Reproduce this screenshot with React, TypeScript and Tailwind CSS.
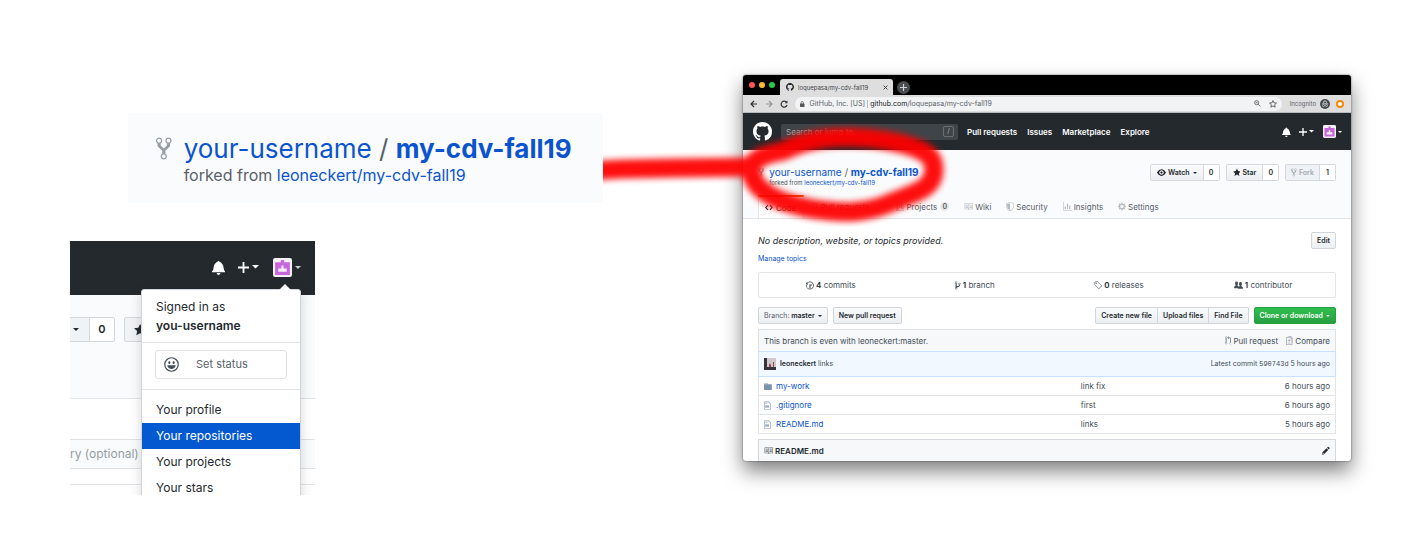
import React from "react";
import type { ReactNode } from "react";

type Glyph = { w: number; d: string };

const ICONS = {
  fork: { w: 10, d: "M8 1a1.993 1.993 0 0 0-1 3.72V6L5 8 3 6V4.72A1.993 1.993 0 0 0 2 1a1.993 1.993 0 0 0-1 3.72V6.5l3 3v1.78A1.993 1.993 0 0 0 5 15a1.993 1.993 0 0 0 1-3.72V9.5l3-3V4.72A1.993 1.993 0 0 0 8 1zM2 4.2C1.34 4.2.8 3.65.8 3c0-.65.55-1.2 1.2-1.2.65 0 1.2.55 1.2 1.2 0 .65-.55 1.2-1.2 1.2zm3 10c-.66 0-1.2-.55-1.2-1.2 0-.65.55-1.2 1.2-1.2.65 0 1.2.55 1.2 1.2 0 .65-.55 1.2-1.2 1.2zm3-10c-.66 0-1.2-.55-1.2-1.2 0-.65.55-1.2 1.2-1.2.65 0 1.2.55 1.2 1.2 0 .65-.55 1.2-1.2 1.2z" },
  bell: { w: 14, d: "M13.99 11.991v1H0v-1l.73-.58c.769-.769.809-2.547 1.189-4.416.77-3.767 4.077-4.996 4.077-4.996 0-.55.45-1 .999-1 .55 0 1 .45 1 1 0 0 3.387 1.229 4.156 4.996.38 1.879.42 3.657 1.19 4.417l.659.58h-.01zM6.995 15.99c1.11 0 1.999-.89 1.999-1.999H4.996c0 1.11.89 1.999 1.999 1.999z" },
  star: { w: 14, d: "M14 6l-4.9-.64L7 1 4.9 5.36 0 6l3.6 3.26L2.67 14 7 11.67 11.33 14l-.93-4.74L14 6z" },
  eye: { w: 16, d: "M8.06 2C3 2 0 8 0 8s3 6 8.06 6C13 14 16 8 16 8s-3-6-7.94-6zM8 12c-2.2 0-4-1.78-4-4 0-2.2 1.8-4 4-4 2.22 0 4 1.8 4 4 0 2.22-1.78 4-4 4zm2-4c0 1.11-.89 2-2 2-1.11 0-2-.89-2-2 0-1.11.89-2 2-2 1.11 0 2 .89 2 2z" },
  code: { w: 14, d: "M9.5 3L8 4.5 11.5 8 8 11.5 9.5 13 14 8 9.5 3zm-5 0L0 8l4.5 5L6 11.5 2.5 8 6 4.5 4.5 3z" },
  pull: { w: 12, d: "M11 11.28V5c-.03-.78-.34-1.47-.94-2.06C9.46 2.35 8.78 2.03 8 2H7V0L4 3l3 3V4h1c.27.02.48.11.69.31.21.2.3.42.31.69v6.28A1.993 1.993 0 0 0 10 15a1.993 1.993 0 0 0 1-3.72zm-1 2.92c-.66 0-1.2-.55-1.2-1.2 0-.65.55-1.2 1.2-1.2.65 0 1.2.55 1.2 1.2 0 .65-.55 1.2-1.2 1.2zM4 3c0-1.11-.89-2-2-2a1.993 1.993 0 0 0-1 3.72v6.56A1.993 1.993 0 0 0 2 15a1.993 1.993 0 0 0 1-3.72V4.72c.59-.34 1-.98 1-1.72zm-.8 10c0 .66-.55 1.2-1.2 1.2-.65 0-1.2-.55-1.2-1.2 0-.65.55-1.2 1.2-1.2.65 0 1.2.55 1.2 1.2zM2 4.2C1.34 4.2.8 3.65.8 3c0-.65.55-1.2 1.2-1.2.65 0 1.2.55 1.2 1.2 0 .65-.55 1.2-1.2 1.2z" },
  project: { w: 15, d: "M10 12h3V2h-3v10zm-4-2h3V2H6v8zm-4 4h3V2H2v12zm-1 1h13V1H1v14zM14 0H1a1 1 0 0 0-1 1v14a1 1 0 0 0 1 1h13a1 1 0 0 0 1-1V1a1 1 0 0 0-1-1z" },
  book: { w: 16, d: "M3 5h4v1H3V5zm0 3h4V7H3v1zm0 2h4V9H3v1zm11-5h-4v1h4V5zm0 2h-4v1h4V7zm0 2h-4v1h4V9zm2-6v9c0 .55-.45 1-1 1H9.5l-1 1-1-1H2c-.55 0-1-.45-1-1V3c0-.55.45-1 1-1h5.5l1 1 1-1H15c.55 0 1 .45 1 1zm-8 .5L7.5 3H2v9h6V3.5zm7-.5H9.5l-.5.5V12h6V3z" },
  shield: { w: 14, d: "M0 2l7-2 7 2v6.02C14 12.69 8.69 16 7 16c-1.69 0-7-3.31-7-7.98V2zm1 .75L7 1l6 1.75v5.268C13 12.104 8.449 15 7 15c-1.449 0-6-2.896-6-6.982V2.75zm1 .75L7 2v12c-1.207 0-5-2.482-5-5.985V3.5z" },
  graph: { w: 16, d: "M16 14v1H0V0h1v14h15zM5 13H3V8h2v5zm4 0H7V3h2v10zm4 0h-2V6h2v7z" },
  gear: { w: 14, d: "M14 8.77v-1.6l-1.94-.64-.45-1.09.88-1.84-1.13-1.13-1.81.91-1.09-.45-.69-1.92h-1.6l-.63 1.94-1.11.45-1.84-.88-1.13 1.13.91 1.81-.45 1.09L0 7.23v1.59l1.94.64.45 1.09-.88 1.84 1.13 1.13 1.81-.91 1.09.45.69 1.92h1.59l.63-1.94 1.11-.45 1.84.88 1.13-1.13-.92-1.81.47-1.09L14 8.75v.02zM7 11c-1.66 0-3-1.34-3-3s1.34-3 3-3 3 1.34 3 3-1.34 3-3 3z" },
  history: { w: 14, d: "M8 13H6V6h5v2H8v5zM7 1C4.81 1 2.87 2.02 1.59 3.59L0 2v4h4L2.5 4.5C3.55 3.17 5.17 2.3 7 2.3c3.14 0 5.7 2.56 5.7 5.7s-2.56 5.7-5.7 5.7A5.71 5.71 0 0 1 1.3 8c0-.34.03-.67.09-1H.08C.03 7.33 0 7.66 0 8c0 3.86 3.14 7 7 7s7-3.14 7-7-3.14-7-7-7z" },
  branch: { w: 10, d: "M10 5c0-1.11-.89-2-2-2a1.993 1.993 0 0 0-1 3.72v.3c-.02.52-.23.98-.63 1.38-.4.4-.86.61-1.38.63-.83.02-1.48.16-2 .45V4.72a1.993 1.993 0 0 0-1-3.72C.88 1 0 1.89 0 3a2 2 0 0 0 1 1.72v6.56c-.59.35-1 .99-1 1.72 0 1.11.89 2 2 2 1.11 0 2-.89 2-2 0-.53-.2-1-.53-1.36.09-.06.48-.41.59-.47.25-.11.56-.17.94-.17 1.05-.05 1.95-.45 2.75-1.25S8.95 7.77 9 6.73h-.02C9.59 6.37 10 5.73 10 5zM2 1.8c.66 0 1.2.55 1.2 1.2 0 .65-.55 1.2-1.2 1.2C1.35 4.2.8 3.65.8 3c0-.65.55-1.2 1.2-1.2zm0 12.41c-.66 0-1.2-.55-1.2-1.2 0-.65.55-1.2 1.2-1.2.65 0 1.2.55 1.2 1.2 0 .65-.55 1.2-1.2 1.2zm6-8c-.66 0-1.2-.55-1.2-1.2 0-.65.55-1.2 1.2-1.2.65 0 1.2.55 1.2 1.2 0 .65-.55 1.2-1.2 1.2z" },
  tag: { w: 14, d: "M7.73 1.73C7.26 1.26 6.62 1 5.96 1H3.5C2.13 1 1 2.13 1 3.5v2.47c0 .66.27 1.3.73 1.77l6.06 6.06c.39.39 1.02.39 1.41 0l4.59-4.59a.996.996 0 0 0 0-1.41L7.73 1.73zM2.38 7.09c-.31-.3-.47-.7-.47-1.13V3.5c0-.88.72-1.59 1.59-1.59h2.47c.42 0 .83.16 1.13.47l6.14 6.13-4.73 4.73-6.13-6.15zM3.01 3h2v2H3V3h.01z" },
  people: { w: 16, d: "M16 12.999c0 .439-.45 1-1 1H7.995c-.539 0-.994-.447-.995-.999H1c-.54 0-1-.561-1-1 0-2.634 3-4 3-4s.229-.409 0-1c-.841-.621-1.058-.59-1-3 .058-2.419 1.367-3 2.5-3s2.442.58 2.5 3c.058 2.41-.159 2.379-1 3-.229.59 0 1 0 1s1.549.711 2.42 2.088C9.196 9.369 10 8.999 10 8.999s.229-.409 0-1c-.841-.62-1.058-.59-1-3 .058-2.419 1.367-3 2.5-3s2.437.581 2.495 3c.059 2.41-.158 2.38-1 3-.229.59 0 1 0 1s3.005 1.366 3.005 4" },
  folder: { w: 14, d: "M13 4H7V3c0-.66-.31-1-1-1H1c-.55 0-1 .45-1 1v10c0 .55.45 1 1 1h12c.55 0 1-.45 1-1V5c0-.55-.45-1-1-1zM6 4H1V3h5v1z" },
  file: { w: 12, d: "M6 5H2V4h4v1zM2 8h7V7H2v1zm0 2h7V9H2v1zm0 2h7v-1H2v1zm10-7.5V14c0 .55-.45 1-1 1H1c-.55 0-1-.45-1-1V2c0-.55.45-1 1-1h7.5L12 4.5zM11 5L8 2H1v12h10V5z" },
  pencil: { w: 14, d: "M0 12v3h3l8-8-3-3-8 8zm3 2H1v-2h1v1h1v1zm10.3-9.3L12 6 9 3l1.300-1.300a.996.996 0 0 1 1.410 0l1.590 1.590c.390.390.390 1.020 0 1.410z" },
  diff: { w: 13, d: "M6 7h2v1H6v2H5V8H3V7h2V5h1v2zm-3 6h5v-1H3v1zM7.5 2L11 5.5V15c0 .55-.45 1-1 1H1c-.55 0-1-.45-1-1V3c0-.55.45-1 1-1h6.5zM10 6L7 3H1v12h9V6zM8.5 0H3v1h5l4 4v8h1V4.5L8.5 0z" },
  mark: { w: 16, d: "M8 0C3.58 0 0 3.58 0 8c0 3.54 2.29 6.53 5.47 7.59.4.07.55-.17.55-.38 0-.19-.01-.82-.01-1.49-2.01.37-2.53-.49-2.69-.94-.09-.23-.48-.94-.82-1.13-.28-.15-.68-.52-.01-.53.63-.01 1.08.58 1.23.82.72 1.21 1.87.87 2.33.66.07-.52.28-.87.51-1.07-1.78-.2-3.64-.89-3.64-3.95 0-.87.31-1.59.82-2.15-.08-.2-.36-1.02.08-2.12 0 0 .67-.21 2.2.82.64-.18 1.32-.27 2-.27.68 0 1.36.09 2 .27 1.53-1.04 2.2-.82 2.2-.82.44 1.1.16 1.92.08 2.12.51.56.82 1.27.82 2.15 0 3.07-1.87 3.75-3.65 3.95.29.25.54.73.54 1.48 0 1.07-.01 1.93-.01 2.2 0 .21.15.46.55.38A8.013 8.013 0 0 0 16 8c0-4.42-3.58-8-8-8z" },
} satisfies Record<string, Glyph>;

function Icon({ name, className = "h-[9px]" }: { name: keyof typeof ICONS; className?: string }) {
  const icon = ICONS[name];
  return (
    <svg viewBox={`0 0 ${icon.w} 16`} className={`w-auto shrink-0 ${className}`} fill="currentColor" aria-hidden="true">
      <path fillRule="evenodd" d={icon.d} />
    </svg>
  );
}

function Caret({ className = "w-[5px]" }: { className?: string }) {
  return (
    <svg viewBox="0 0 8 4" className={`shrink-0 ${className}`} fill="currentColor" aria-hidden="true">
      <path d="M0 0h8L4 4z" />
    </svg>
  );
}

function Plus({ className }: { className: string }) {
  return (
    <svg viewBox="0 0 12 12" className={`shrink-0 ${className}`} fill="currentColor" aria-hidden="true">
      <path d="M5 0h2v5h5v2H7v5H5V7H0V5h5z" />
    </svg>
  );
}

function Avatar({ className }: { className: string }) {
  return (
    <svg viewBox="0 0 18 18" className={`shrink-0 ${className}`} aria-hidden="true">
      <rect width="18" height="18" rx="2" fill="#f6f0f7" />
      <path d="M2 4h5.500V2h3v2H16v12H2z" fill="#c866dc" />
      <path d="M8 7h2v3h3v3H5v-3h3z" fill="#f6f0f7" />
    </svg>
  );
}

function Smiley() {
  return (
    <svg viewBox="0 0 16 16" className="size-[15px] shrink-0" aria-hidden="true">
      <circle cx="8" cy="8" r="7.2" fill="none" stroke="#444d56" strokeWidth="1.3" />
      <rect x="4.6" y="4.4" width="2.2" height="3" rx="1" fill="#444d56" />
      <rect x="9.2" y="4.4" width="2.2" height="3" rx="1" fill="#444d56" />
      <path d="M3.4 8.8h9.2c-.5 2.4-2.300 4-4.600 4s-4.100-1.600-4.600-4z" fill="#444d56" />
    </svg>
  );
}

function TitleCard() {
  return (
    <section className="ml-[58px] flex h-[90px] items-start bg-[#fafbfc] pt-[20px] pl-[28px]">
      <Icon name="fork" className="mt-[3px] h-[25px] text-[#959da5]" />
      <div className="ml-[12px] whitespace-nowrap">
        <h1 className="text-[26px] leading-[31px] text-[#586069]">
          <a href="#user" className="text-[#0b54cf]">your-username</a>
          {" / "}
          <a href="#repo" className="font-bold text-[#0b54cf]">my-cdv-fall19</a>
        </h1>
        <p className="text-[16px] leading-[22px] text-[#586069]">
          forked from <a href="#source" className="text-[#0b54cf]">leoneckert/my-cdv-fall19</a>
        </p>
      </div>
    </section>
  );
}

const MENU = ["Your profile", "Your repositories", "Your projects", "Your stars"];

function AccountPanel() {
  return (
    <section className="relative mt-[38px] h-[254px] w-[245px] overflow-hidden bg-white text-[12px] text-[#24292e]">
      <header className="flex h-[54px] items-center justify-end bg-[#24292e] pr-[14px] pb-[2px] text-white">
        <button aria-label="Notifications"><Icon name="bell" className="h-[15px]" /></button>
        <button aria-label="Create" className="ml-[13px] flex items-center gap-[3px]">
          <Plus className="size-[11px]" />
          <Caret className="w-[7px]" />
        </button>
        <button aria-label="Account" className="ml-[14px] flex items-center gap-[3px]">
          <Avatar className="size-[19px]" />
          <Caret className="w-[6px] text-[#c8cacc]" />
        </button>
      </header>
      <div className="flex h-[104px] items-start border-b border-[#e1e4e8] bg-[#fafbfc] pt-[22px] text-[11px] font-semibold">
        <button aria-label="Watch" className="flex h-[25px] w-[19px] items-center border-y border-[#d5d8da] bg-[#eff3f6] pl-[3px]">
          <Caret className="w-[6px]" />
        </button>
        <span className="flex h-[25px] w-[26px] items-center justify-center rounded-r-[2px] border border-[#d5d8da] bg-white">0</span>
        <button aria-label="Star" className="ml-[9px] flex h-[25px] w-[60px] items-center rounded-[2px] border border-[#d5d8da] bg-[#eff3f6] pl-[9px]">
          <Icon name="star" className="h-[14px]" />
        </button>
      </div>
      <div className="mt-[40px] flex h-[30px] items-center border-y border-[#dfe2e5] bg-[#fafbfc] whitespace-nowrap text-[#959da5]">
        ry (optional)
      </div>
      <div className="mt-[15px] border-t border-[#e1e4e8]" />

      <div className="absolute top-[48px] right-[14px] h-[220px] w-[160px] rounded-t-[3px] border border-[#d1d5da] bg-white shadow-[0_2px_12px_rgba(27,31,35,0.18)]">
        <svg viewBox="0 0 12 6" className="absolute top-[-6px] right-[9px] w-[12px]" fill="white" aria-hidden="true">
          <path d="M6 0l6 6H0z" />
        </svg>
        <div className="h-[53px] border-b border-[#e1e4e8] px-[14px] pt-[7px] leading-[19px]">
          <p>Signed in as</p>
          <p className="font-semibold">you-username</p>
        </div>
        <div className="h-[47px] border-b border-[#e1e4e8] px-[13px] pt-[7px]">
          <button className="flex h-[29px] w-full items-center gap-[17px] rounded-[3px] border border-[#dfe2e5] pl-[8px] text-[11px] text-[#586069]">
            <Smiley />
            Set status
          </button>
        </div>
        <nav className="flex flex-col pt-[7px]">
          {MENU.map((item, i) => (
            <a
              key={item}
              href="#menu"
              className={
                i === 1
                  ? "h-[26px] bg-[#0459d0] px-[14px] leading-[26px] text-white"
                  : "h-[26px] px-[14px] leading-[26px]"
              }
            >
              {item}
            </a>
          ))}
        </nav>
      </div>
    </section>
  );
}

function BrowserBar() {
  return (
    <div className="text-[7px] leading-[11px]">
      <div className="flex h-[20px] items-end rounded-t-[3px] bg-black pl-[6px]">
        <div className="mb-[7px] flex gap-[4px]">
          <span className="size-[6px] rounded-full bg-[#fb5652]" />
          <span className="size-[6px] rounded-full bg-[#fdbc2e]" />
          <span className="size-[6px] rounded-full bg-[#29ca41]" />
        </div>
        <div className="ml-[5px] flex h-[16px] w-[113px] items-center gap-[4px] rounded-t-[3px] bg-[#dededf] pr-[5px] pl-[6px] text-[#3f4347]">
          <Icon name="mark" className="h-[8px] text-[#1b1f23]" />
          <span className="flex-1 text-[6px] whitespace-nowrap">loquepasa/my-cdv-fall19</span>
          <svg viewBox="0 0 8 8" className="size-[5px] shrink-0" stroke="#3f4347" strokeWidth="1.6" aria-hidden="true">
            <path d="M1 1l6 6M7 1L1 7" />
          </svg>
        </div>
        <button aria-label="New tab" className="mb-[1px] ml-[4px] flex size-[13px] items-center justify-center rounded-full bg-[#4a4d50] text-[#d0d2d4]">
          <Plus className="size-[7px]" />
        </button>
      </div>
      <div className="flex h-[18px] items-center border-b border-[#b8babb] bg-[#dededf] px-[7px] text-[#5f6368]">
        <svg viewBox="0 0 38 10" className="h-[10px] w-[38px] shrink-0" fill="none" stroke="#303438" strokeWidth="1.2" aria-hidden="true">
          <path d="M7 5H1M4 2L1 5l3 3" />
          <path d="M16 5h6M19 2l3 3-3 3" stroke="#929598" />
          <path d="M36.600 3.400A3 3 0 1 0 37 6" />
          <path d="M37.500 1.500v2.700h-2.700z" fill="#303438" stroke="none" />
        </svg>
        <div className="ml-[7px] flex h-[14px] flex-1 items-center rounded-full bg-[#f1f3f4] pr-[5px] pl-[5px] whitespace-nowrap">
          <svg viewBox="0 0 6 8" className="h-[6px] shrink-0" aria-hidden="true">
            <path d="M1.500 4V2.200a1.500 1.500 0 0 1 3 0V4" fill="none" stroke="#55595d" />
            <rect y="3.300" width="6" height="4.700" rx=".6" fill="#55595d" />
          </svg>
          <span className="ml-[5px]">GitHub, Inc. [US]</span>
          <span className="mx-[2px] h-[8px] border-l border-[#b9bcbf]" />
          <span><span className="text-[#202124]">github.com</span>/loquepasa/my-cdv-fall19</span>
          <svg viewBox="0 0 12 12" className="ml-auto size-[7px] shrink-0" fill="none" stroke="#55595d" strokeWidth="1.400" aria-hidden="true">
            <circle cx="4.500" cy="4.500" r="3.500" />
            <path d="M7.200 7.200L11 11M3 4.500h3" />
          </svg>
          <svg viewBox="0 0 14 14" className="ml-[8px] size-[8px] shrink-0" fill="none" stroke="#45494d" strokeWidth="1.400" aria-hidden="true">
            <path d="M7 1l1.800 4 4.200.400-3.200 2.900 1 4.300L7 10.400l-3.800 2.200 1-4.300L1 5.400 5.200 5z" />
          </svg>
        </div>
        <span className="ml-[8px] text-[6px]">Incognito</span>
        <svg viewBox="0 0 20 20" className="ml-[4px] size-[10px] shrink-0" aria-hidden="true">
          <circle cx="10" cy="10" r="10" fill="#46494c" />
          <path d="M4 9.500h12M7 8l1-4h4l1 4" stroke="#dee1e3" strokeWidth="1.500" fill="none" />
          <circle cx="7" cy="13" r="2" stroke="#dee1e3" strokeWidth="1.300" fill="none" />
          <circle cx="13" cy="13" r="2" stroke="#dee1e3" strokeWidth="1.300" fill="none" />
        </svg>
        <span className="ml-[6px] size-[8px] rounded-full border-2 border-[#f48a0c] bg-white" />
      </div>
    </div>
  );
}

function SiteHeader() {
  return (
    <header className="flex h-[37px] items-center bg-[#24292e] pr-[9px] pl-[10px] text-[8px] font-semibold text-white">
      <Icon name="mark" className="h-[19px]" />
      <label className="ml-[9px] flex h-[16px] w-[177px] items-center rounded-[2px] bg-[#3f4448] pr-[4px] pl-[5px] font-normal">
        <input aria-label="Search" placeholder="Search or jump to..." className="min-w-0 flex-1 bg-transparent outline-none placeholder:text-[#a7abae]" />
        <span className="flex h-[11px] w-[11px] items-center justify-center rounded-[2px] border border-[#6b7075] text-[7px] text-[#a7abae]">/</span>
      </label>
      <nav className="ml-[9px] flex gap-[10px] whitespace-nowrap">
        <a href="#pulls">Pull requests</a>
        <a href="#issues">Issues</a>
        <a href="#market">Marketplace</a>
        <a href="#explore">Explore</a>
      </nav>
      <button aria-label="Notifications" className="ml-auto"><Icon name="bell" className="h-[10px]" /></button>
      <button aria-label="Create" className="ml-[8px] flex items-center gap-[2px]">
        <Plus className="size-[8px]" />
        <Caret className="w-[5px]" />
      </button>
      <button aria-label="Account" className="ml-[9px] flex items-center gap-[2px]">
        <Avatar className="size-[13px]" />
        <Caret className="w-[4px]" />
      </button>
    </header>
  );
}

function CountButton({ children, count, muted = false }: { children: ReactNode; count: string; muted?: boolean }) {
  return (
    <div className="flex h-[17px] rounded-[2px] border border-[#d5d8da] text-[7px] leading-[11px] font-semibold">
      <button
        className={
          muted
            ? "flex items-center gap-[2px] bg-[#eef1f5] px-[5px] text-[#a3a8ae]"
            : "flex items-center gap-[2px] bg-linear-to-b from-[#fafbfc] to-[#eceff2] px-[6px]"
        }
      >
        {children}
      </button>
      <span className="flex w-[16px] items-center justify-center border-l border-[#d5d8da] bg-white">{count}</span>
    </div>
  );
}

function RepoHead() {
  return (
    <div className="border-b border-[#e1e4e8] bg-[#fafbfc] px-[15px] pt-[14px]">
      <div className="flex h-[31px] items-start justify-between whitespace-nowrap">
        <div className="flex pt-[2px]">
          <Icon name="fork" className="mt-[1px] h-[10px] text-[#959da5]" />
          <div className="ml-[5px]">
            <h2 className="text-[10px] leading-[12px] text-[#586069]">
              <a href="#user" className="text-[#0b54cf]">your-username</a>
              {" / "}
              <a href="#repo" className="font-bold text-[#0b54cf]">my-cdv-fall19</a>
            </h2>
            <p className="text-[6px] leading-[10px] text-[#444d56]">
              forked from <a href="#source" className="text-[#0b54cf]">leoneckert/my-cdv-fall19</a>
            </p>
          </div>
        </div>
        <div className="flex gap-[6px]">
          <CountButton count="0"><Icon name="eye" />Watch<Caret className="ml-[1px] w-[4px]" /></CountButton>
          <CountButton count="0"><Icon name="star" />Star</CountButton>
          <CountButton count="1" muted><Icon name="fork" />Fork</CountButton>
        </div>
      </div>
      <nav className="flex h-[23px] items-stretch text-[8px] whitespace-nowrap text-[#586069]">
        <a href="#code" className="flex w-[46px] items-center gap-[3px] border-x border-t-2 border-x-[#e1e4e8] border-t-[#e36209] bg-white px-[6px] text-[#24292e]">
          <Icon name="code" className="h-[9px]" />Code
        </a>
        <a href="#pulls" className="ml-[7px] flex w-[75px] items-center gap-[3px]"><Icon name="pull" className="h-[9px] text-[#b3b8bd]" />Pull requests</a>
        <a href="#projects" className="ml-[10px] flex items-center gap-[3px]">
          <Icon name="project" className="h-[8px] text-[#b3b8bd]" />Projects
          <span className="flex size-[9px] items-center justify-center rounded-full bg-[#e7e8ea] text-[7px] leading-[9px] font-semibold">0</span>
        </a>
        <a href="#wiki" className="ml-[15px] flex items-center gap-[2px]"><Icon name="book" className="h-[9px] text-[#b3b8bd]" />Wiki</a>
        <a href="#security" className="ml-[15px] flex items-center gap-[2px]"><Icon name="shield" className="h-[9px] text-[#b3b8bd]" />Security</a>
        <a href="#insights" className="ml-[15px] flex items-center gap-[2px]"><Icon name="graph" className="h-[9px] text-[#b3b8bd]" />Insights</a>
        <a href="#settings" className="ml-[15px] flex items-center gap-[2px]"><Icon name="gear" className="h-[9px] text-[#b3b8bd]" />Settings</a>
      </nav>
    </div>
  );
}

const BTN = "flex h-[17px] items-center gap-[3px] border border-[#d1d5d9] bg-linear-to-b from-[#fafbfc] to-[#eceff2] px-[5px] text-[7px] leading-[11px] font-semibold whitespace-nowrap";

const STATS: { icon: keyof typeof ICONS; count: string; label: string }[] = [
  { icon: "history", count: "4", label: "commits" },
  { icon: "branch", count: "1", label: "branch" },
  { icon: "tag", count: "0", label: "releases" },
  { icon: "people", count: "1", label: "contributor" },
];

const FILES: { icon: "folder" | "file"; name: string; message: string; age: string }[] = [
  { icon: "folder", name: "my-work", message: "link fix", age: "6 hours ago" },
  { icon: "file", name: ".gitignore", message: "first", age: "6 hours ago" },
  { icon: "file", name: "README.md", message: "links", age: "5 hours ago" },
];

function RepoBody() {
  return (
    <div className="px-[15px] pt-[13px] text-[8px] leading-[12px] text-[#444d56]">
      <div className="flex items-center justify-between">
        <p className="text-[9px] text-[#24292e] italic">No description, website, or topics provided.</p>
        <button className={`${BTN} rounded-[2px] text-[#24292e]`}>Edit</button>
      </div>
      <a href="#topics" className="mt-[3px] block text-[7px] leading-[13px] text-[#0b54cf]">Manage topics</a>
      <div className="mt-[7px] grid h-[26px] grid-cols-4 items-center rounded-[2px] border border-[#e1e4e8]">
        {STATS.map((s) => (
          <a key={s.label} href="#stats" className="flex items-center justify-center gap-[2px]">
            <Icon name={s.icon} className="h-[9px]" />
            <span><b className="font-semibold text-[#24292e]">{s.count}</b> {s.label}</span>
          </a>
        ))}
      </div>
      <div className="mt-[9px] flex text-[#24292e]">
        <button className={`${BTN} rounded-[2px]`}>
          <span><span className="font-normal text-[#586069]">Branch:</span> master</span><Caret className="w-[4px]" />
        </button>
        <button className={`${BTN} ml-[5px] rounded-[2px]`}>New pull request</button>
        <div className="ml-auto flex">
          <button className={`${BTN} rounded-l-[2px]`}>Create new file</button>
          <button className={`${BTN} border-l-0`}>Upload files</button>
          <button className={`${BTN} rounded-r-[2px] border-l-0`}>Find File</button>
        </div>
        <button className="ml-[5px] flex h-[17px] items-center gap-[3px] rounded-[2px] border border-[#269f42] bg-linear-to-b from-[#2fbf4f] to-[#269f3f] px-[5px] text-[7px] leading-[11px] font-semibold whitespace-nowrap text-white">
          Clone or download<Caret className="w-[4px]" />
        </button>
      </div>
      <div className="mt-[5px] flex h-[22px] items-center border border-b-0 border-[#dfe2e5] bg-[#f6f8fa] px-[5px]">
        <span>This branch is even with leoneckert:master.</span>
        <a href="#pull" className="ml-auto flex items-center gap-[2px]"><Icon name="pull" className="h-[9px] text-[#8a9199]" />Pull request</a>
        <a href="#compare" className="ml-[8px] flex items-center gap-[2px]"><Icon name="diff" className="h-[9px] text-[#8a9199]" />Compare</a>
      </div>
      <div className="flex h-[26px] items-center border border-[#c8e1ff] bg-[#f1f8ff] px-[5px] text-[7px]">
        <svg viewBox="0 0 12 12" className="size-[12px]" aria-hidden="true">
          <rect width="12" height="12" fill="#cfc9cc" />
          <path d="M0 0h3v9h9v3H0z" fill="#37333a" />
          <path d="M5 7l1-2 1 2v2H5zM9 4h1v5H9z" fill="#8d4a50" />
        </svg>
        <span className="ml-[4px]"><b className="font-semibold text-[#24292e]">leoneckert</b> links</span>
        <span className="ml-auto">Latest commit <span className="font-['Liberation_Mono',monospace]">590743d</span> 5 hours ago</span>
      </div>
      <table className="w-full border-separate border-spacing-0 border-x border-[#e1e4e8]">
        <tbody>
          {FILES.map((f) => (
            <tr key={f.name} className="h-[19px]">
              <td className="w-[55%] border-b border-[#e1e4e8] py-0 pl-[5px]">
                <span className="flex items-center">
                  <span className="flex w-[12px]"><Icon name={f.icon} className="h-[9px] text-[#7e93ab]" /></span>
                  <a href="#file" className="text-[#0b54cf]">{f.name}</a>
                </span>
              </td>
              <td className="border-b border-[#e1e4e8] p-0 pl-[5px]">{f.message}</td>
              <td className="border-b border-[#e1e4e8] p-0 pr-[5px] text-right">{f.age}</td>
            </tr>
          ))}
        </tbody>
      </table>
      <div className="mt-[5px] flex h-[22px] items-center border border-b-0 border-[#d5d8dc] bg-[#f6f8fa] px-[5px] font-semibold text-[#24292e]">
        <Icon name="book" className="h-[9px] text-[#586069]" />
        <span className="ml-[2px]">README.md</span>
        <button aria-label="Edit README.md" className="ml-auto"><Icon name="pencil" className="h-[9px]" /></button>
      </div>
    </div>
  );
}

function Annotation() {
  return (
    <svg viewBox="0 0 360 180" className="pointer-events-none absolute top-[25px] left-[-140px] h-[180px] w-[360px] max-w-none overflow-hidden" fill="none" stroke="#ff0000" strokeLinecap="round" strokeLinejoin="round" aria-hidden="true">
      <defs>
        <filter id="soft" x="-10%" y="-20%" width="120%" height="140%">
          <feGaussianBlur stdDeviation="3" />
        </filter>
      </defs>
      <g filter="url(#soft)" strokeWidth="19" opacity="0.94">
        <path d="M-20 71L20 69L70 68L146 67" />
        <path d="M180 51C162 54 148 60 148 69C148 79 154 88 168 96C184 105 215 112 247 112C270 111 282 105 297 99C318 91 331 86 331 69C331 56 322 50 300 44C275 38 250 36 226 38C208 40 190 46 180 51" />
      </g>
    </svg>
  );
}

export default function App() {
  return (
    <main className="grid min-h-screen grid-cols-[533fr_608fr] items-start gap-[140px] bg-white pr-[50px] pl-[70px] font-['Inter',sans-serif]">
      <div className="min-w-0 pt-[113px]">
        <TitleCard />
        <AccountPanel />
      </div>
      <div className="relative mt-[75px] min-w-0 rounded-[3px] bg-white text-[#24292e] shadow-[0_10px_20px_rgba(0,0,0,0.5),0_0_2px_rgba(0,0,0,0.6)]">
        <BrowserBar />
        <SiteHeader />
        <RepoHead />
        <RepoBody />
        <Annotation />
      </div>
    </main>
  );
}
